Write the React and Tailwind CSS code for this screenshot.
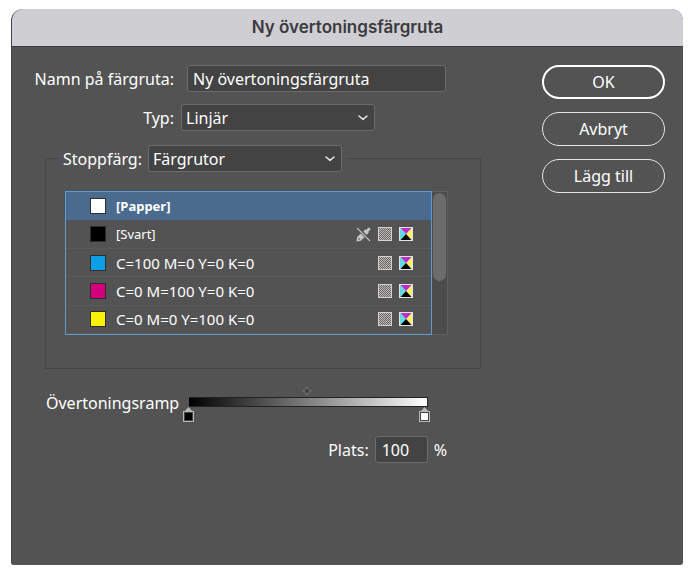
import { useState } from "react";

const swatches = [
  { name: "[Papper]", color: "bg-white", size: "text-[13px]", icons: false, locked: false },
  { name: "[Svart]", color: "bg-black", size: "text-[13px]", icons: true, locked: true },
  { name: "C=100 M=0 Y=0 K=0", color: "bg-[#0d9fe6]", size: "text-[15px]", icons: true, locked: false },
  { name: "C=0 M=100 Y=0 K=0", color: "bg-[#d3007b]", size: "text-[15px]", icons: true, locked: false },
  { name: "C=0 M=0 Y=100 K=0", color: "bg-[#f7f207]", size: "text-[15px]", icons: true, locked: false },
];

const field = "h-[27px] rounded-[3px] border border-[#6c6c6c] bg-[#434343] text-white outline-none";

function Dropdown({ id, options }) {
  return (
    <div className="relative w-[194px]">
      <select id={id} className={`${field} w-full appearance-none pl-1 pr-8`}>
        {options.map((o) => (
          <option key={o}>{o}</option>
        ))}
      </select>
      <svg viewBox="0 0 10 6" className="pointer-events-none absolute right-[7px] top-[11px] h-[6px] w-[10px]" fill="none" stroke="#e6e6e6" strokeWidth="1.5" strokeLinecap="round" strokeLinejoin="round">
        <path d="M1 1l4 3.4L9 1" />
      </svg>
    </div>
  );
}

function LockedIcon() {
  return (
    <svg viewBox="0 0 16 16" className="h-[15px] w-[15px]" aria-hidden="true">
      <path d="M.5 15.500l.8-4.800L5 7l4 4-3.700 3.700z" fill="#c6c6c6" />
      <path d="M6.500 6.500L10 2.500l1 .6L12.500 1.200c1.700-1.200 3.600.6 2.400 2.300L13 5.200l.6 1L10 9.800z" fill="#c6c6c6" />
      <path d="M2.300 13.700l.8-2.200 1.500 1.500z" fill="#535353" />
      <path d="M1.500 0L16 14.500" stroke="#535353" strokeWidth="2" />
      <path d="M1 1l14 14" stroke="#c6c6c6" strokeWidth="1.300" />
    </svg>
  );
}

function ProcessIcon() {
  return (
    <svg viewBox="0 0 14 14" className="h-[14px] w-[14px]" aria-hidden="true" shapeRendering="crispEdges">
      <defs>
        <pattern id="halftone" width="2" height="2" patternUnits="userSpaceOnUse">
          <rect width="2" height="2" fill="#b9b6b3" />
          <rect width="1" height="1" fill="#6b6967" />
          <rect x="1" y="1" width="1" height="1" fill="#6b6967" />
        </pattern>
      </defs>
      <rect width="14" height="14" fill="#d4d2d0" />
      <rect x="1" y="1" width="12" height="12" fill="url(#halftone)" />
    </svg>
  );
}

function CmykIcon() {
  return (
    <svg viewBox="0 0 14 14" className="h-[14px] w-[14px]" aria-hidden="true">
      <rect width="14" height="14" fill="#e4e4e4" />
      <path d="M1 1l6 6-6 6z" fill="#5fdbe6" />
      <path d="M13 1L7 7l6 6z" fill="#fff06a" />
      <path d="M1.500 1h11L7 7z" fill="#bb2fc6" />
      <path d="M1.500 13h11L7 7z" fill="#000" />
    </svg>
  );
}

function Stop({ label, value, onChange, fill }) {
  return (
    <>
      <span className="absolute top-0 -ml-[6px]" style={{ left: `${value}%` }}>
        <svg viewBox="0 0 11 15" className="h-[15px] w-[11px]" aria-hidden="true">
          <path d="M5.500 0L10 5H1z" fill="#b8b8b8" />
          <rect x=".5" y="4.500" width="10" height="10" fill="#444" stroke="#b8b8b8" />
          <rect x="2" y="6" width="7" height="7" fill={fill} />
        </svg>
      </span>
      <input
        type="range"
        aria-label={label}
        value={value}
        onChange={(e) => onChange(Number(e.target.value))}
        className="pointer-events-none absolute inset-x-0 top-0 h-[15px] w-full opacity-0 [&::-webkit-slider-thumb]:pointer-events-auto"
      />
    </>
  );
}

export default function App() {
  const [selected, setSelected] = useState(0);
  const [start, setStart] = useState(0);
  const [end, setEnd] = useState(100);
  const pill = "h-[34px] w-full rounded-full text-center text-white";

  return (
    <div className="bg-white pb-[18px] pl-[11px] pr-[17px] pt-[9px] font-['Noto_Sans','Open_Sans',sans-serif] text-[16px] leading-5 text-white">
      <main className="overflow-hidden rounded-b-[3px] rounded-t-[12px] border-l border-[#454545] bg-[#535353]">
        <h1 className="h-[38px] border-b border-[#3c3c3c] bg-[#cfced2] text-center font-['Inter',sans-serif] text-[17px] font-semibold leading-[37px] text-[#3b3b3d]">
          Ny övertoningsfärgruta
        </h1>
        <form className="flex min-h-[518px] items-start justify-between pl-[21px] pr-[18px] pt-[18px]" onSubmit={(e) => e.preventDefault()}>
          <div className="w-[448px]">
            <div className="flex items-center">
              <label htmlFor="name" className="w-[141px] whitespace-nowrap text-right">Namn på färgruta:</label>
              <input id="name" defaultValue="Ny övertoningsfärgruta" className={`${field} ml-[13px] w-[259px] px-[5px]`} />
            </div>
            <div className="mt-3 flex items-center gap-[7px]">
              <label htmlFor="type" className="w-[141px] text-right">Typ:</label>
              <Dropdown id="type" options={["Linjär", "Radiell"]} />
            </div>

            <fieldset className="ml-[12px] mt-[14px] border border-[#464646] pb-[33px] pl-[19px] pr-[32px]">
              <legend className="-ml-[6px] flex items-center gap-[6px] px-[4px]">
                <label htmlFor="stop">Stoppfärg:</label>
                <Dropdown id="stop" options={["Färgrutor", "CMYK", "RGB", "Lab"]} />
              </legend>
              <div className="mt-[19px] flex">
                <ul role="listbox" aria-label="Färgrutor" className="flex h-[144px] min-w-0 flex-1 flex-col border border-[#5b9bd3]">
                  {swatches.map((s, i) => (
                    <li key={s.name} role="presentation" className="flex min-h-0 flex-1">
                      <button
                        type="button"
                        role="option"
                        aria-selected={i === selected}
                        onClick={() => setSelected(i)}
                        className={`flex w-full items-center gap-[10px] border-b pl-6 pr-[18px] text-left ${s.size} ${
                          i === selected ? "border-[#4a6b8e] bg-[#4a6b8e] font-bold" : "border-[#5a5a5a]"
                        }`}
                      >
                        <span className={`h-4 w-4 border border-[#2d2d2d] ${s.color}`} />
                        <span className="flex-1">{s.name}</span>
                        {s.icons && (
                          <span className="flex items-center gap-[7px]">
                            {s.locked && <LockedIcon />}
                            <ProcessIcon />
                            <CmykIcon />
                          </span>
                        )}
                      </button>
                    </li>
                  ))}
                </ul>
                <div className="w-[16px] border-y border-r border-[#5f5f5f] bg-[#4c4c4c] pl-px pr-px pt-px">
                  <div className="h-[88px] rounded-full bg-[#6c6c6c]" />
                </div>
              </div>
            </fieldset>

            <div className="mt-[17px] flex items-start gap-[13px] pl-[13px]">
              <span className="mt-[7px] w-[130px] whitespace-nowrap">Övertoningsramp</span>
              <div className="w-[239px]">
                <div className="mr-[3px]">
                  <svg viewBox="0 0 12 10" className="mx-auto h-[10px] w-[12px]" aria-hidden="true">
                    <path d="M6 0l5 5-5 5-5-5z" fill="#5f5f5f" />
                    <path d="M6 1v8M2 5h8" stroke="#727272" strokeWidth="1.500" />
                    <path d="M6 2.500L8.500 5 6 7.500 3.500 5z" fill="#404040" />
                  </svg>
                </div>
                <div className="mt-px h-[10px] border-y border-r border-[#222] bg-linear-to-r/srgb from-black to-white" />
                <div className="relative mr-[3px] h-[15px]">
                  <Stop label="Startfärg" value={start} onChange={setStart} fill="#000" />
                  <Stop label="Slutfärg" value={end} onChange={setEnd} fill="#fff" />
                </div>
              </div>
            </div>

            <div className="mt-[14px] flex items-center justify-end gap-[6px] pr-[34px]">
              <label htmlFor="place">Plats:</label>
              <input id="place" value={end} onChange={(e) => setEnd(Math.min(100, Number(e.target.value) || 0))} className={`${field} w-[53px] px-[6px]`} />
              <span>%</span>
            </div>
          </div>

          <div className="flex w-[123px] flex-col gap-[13px]">
            <button type="submit" className={`${pill} border-2 border-white`}>OK</button>
            <button type="button" className={`${pill} border border-[#e6e6e6]`}>Avbryt</button>
            <button type="button" className={`${pill} border border-[#e6e6e6]`}>Lägg till</button>
          </div>
        </form>
      </main>
    </div>
  );
}
